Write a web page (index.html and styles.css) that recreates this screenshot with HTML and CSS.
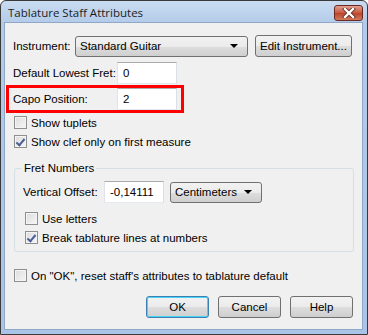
FILE: index.html
```html
<!DOCTYPE html>
<html lang="en">
<head>
  <meta charset="UTF-8">
  <title>Tablature Staff Attributes</title>
  <link rel="stylesheet" href="styles.css">
</head>
<body>
  <div class="window">
    <div class="titlebar">
      <span class="title">Tablature Staff Attributes</span>
      <div class="close-btn">
        <svg width="14" height="10" viewBox="0 0 14 10">
          <path d="M3 1 L11 9 M11 1 L3 9" stroke="#5a2a22" stroke-width="4" stroke-linecap="square"/>
          <path d="M3 1 L11 9 M11 1 L3 9" stroke="#fff" stroke-width="2.4" stroke-linecap="square"/>
        </svg>
      </div>
    </div>

    <div class="client">
      <div class="row row-instrument">
        <span class="label">Instrument:</span>
        <div class="select select-instrument">
          <span>Standard Guitar</span>
          <span class="arrow"></span>
        </div>
        <div class="button button-edit">Edit Instrument...</div>
      </div>

      <div class="row row-fret">
        <span class="label label-wide">Default Lowest Fret:</span>
        <div class="field">0</div>
      </div>

      <div class="row row-capo">
        <span class="label label-wide">Capo Position:</span>
        <div class="field">2</div>
      </div>

      <div class="check-row">
        <span class="checkbox"></span>
        <span>Show tuplets</span>
      </div>
      <div class="check-row">
        <span class="checkbox checked"></span>
        <span>Show clef only on first measure</span>
      </div>

      <fieldset class="group">
        <legend>Fret Numbers</legend>
        <div class="row row-offset">
          <span class="label">Vertical Offset:</span>
          <div class="field field-offset">-0,14111</div>
          <div class="select select-units">
            <span>Centimeters</span>
            <span class="arrow"></span>
          </div>
        </div>
        <div class="check-row">
          <span class="checkbox"></span>
          <span>Use letters</span>
        </div>
        <div class="check-row">
          <span class="checkbox checked"></span>
          <span>Break tablature lines at numbers</span>
        </div>
      </fieldset>

      <div class="check-row check-reset">
        <span class="checkbox"></span>
        <span>On "OK", reset staff's attributes to tablature default</span>
      </div>

      <div class="buttons">
        <div class="button button-default">OK</div>
        <div class="button">Cancel</div>
        <div class="button">Help</div>
      </div>
    </div>
  </div>
</body>
</html>
```

FILE: styles.css
```css
body {
  margin: 0;
  font-family: 'Liberation Sans', Arial, sans-serif;
  font-size: 11.5px;
  color: #000;
  background: #fff;
}

.window {
  width: 368px;
  height: 335px;
  box-sizing: border-box;
  border: 1px solid #3a3a3a;
  border-radius: 6px 6px 0 0;
  background: linear-gradient(#c9dcf1, #b3cbe9 22px, #a9c4e6);
  display: flex;
  flex-direction: column;
  padding: 0 4px 4px 3px;
}

.titlebar {
  height: 21px;
  display: flex;
  align-items: center;
  justify-content: space-between;
  flex-shrink: 0;
}

.title {
  font-family: 'Open Sans', sans-serif;
  font-size: 11.5px;
  color: #1c1c1c;
  padding-left: 4px;
  padding-top: 1px;
}

.close-btn {
  width: 27px;
  height: 14px;
  margin-top: 2px;
  border: 1px solid #6b2a20;
  border-radius: 3px;
  background: linear-gradient(#e0a090, #c8573f 50%, #b9432b 51%, #d27a5e);
  display: flex;
  align-items: center;
  justify-content: center;
}

.client {
  flex: 1;
  background: #f0f0f0;
  border: 1px solid #8fa8c8;
  padding: 0 8px;
  display: flex;
  flex-direction: column;
}

.row {
  display: flex;
  align-items: center;
}

.label {
  white-space: nowrap;
}

.row-instrument {
  margin-top: 12px;
  height: 22px;
}

.row-instrument .label {
  width: 62px;
}

.select {
  height: 21px;
  box-sizing: border-box;
  border: 1px solid #707070;
  border-radius: 3px;
  background: linear-gradient(#f2f2f2, #ebebeb 50%, #dddddd 51%, #cfcfcf);
  display: flex;
  align-items: center;
  justify-content: space-between;
  padding: 0 9px 0 4px;
}

.select-instrument {
  width: 173px;
}

.arrow {
  width: 0;
  height: 0;
  border-left: 4px solid transparent;
  border-right: 4px solid transparent;
  border-top: 4px solid #000;
}

.button {
  height: 22px;
  width: 63px;
  box-sizing: border-box;
  border: 1px solid #707070;
  border-radius: 3px;
  background: linear-gradient(#f2f2f2, #ebebeb 50%, #dddddd 51%, #cfcfcf);
  display: flex;
  align-items: center;
  justify-content: center;
}

.button-edit {
  width: 97px;
  margin-left: 7px;
}

.field {
  height: 22px;
  width: 60px;
  box-sizing: border-box;
  background: #fff;
  border: 1px solid #abadb3;
  border-top-color: #aaaaaa;
  border-left-color: #e2e3ea;
  border-right-color: #dbdfe6;
  border-bottom-color: #e3e9ef;
  display: flex;
  align-items: center;
  padding-left: 5px;
}

.row-fret {
  margin-top: 5px;
  height: 22px;
}

.label-wide {
  width: 104px;
}

.row-capo {
  margin: 1px 0 0 -7px;
  padding-left: 4px;
  width: 178px;
  box-sizing: border-box;
  border: 3px solid #ff0000;
  height: 28px;
}

.check-row {
  display: flex;
  align-items: center;
  height: 19px;
  padding-left: 1px;
}

.checkbox {
  width: 13px;
  height: 13px;
  box-sizing: border-box;
  border: 1px solid #8e8f8f;
  background: linear-gradient(135deg, #dcdcdc, #f6f6f6);
  box-shadow: inset 0 0 0 1px #f4f4f4;
  margin-right: 4px;
  position: relative;
}

.checked::after {
  content: "";
  position: absolute;
  left: 3px;
  top: 1px;
  width: 3px;
  height: 7px;
  border: solid #4a5f97;
  border-width: 0 2px 2px 0;
  transform: rotate(40deg);
}

.group {
  margin: 11px 0 0 1px;
  padding: 7px 8px 0 8px;
  border: 1px solid #d5dfe5;
  border-radius: 3px;
  height: 90px;
  box-sizing: border-box;
  width: 340px;
}

.group legend {
  padding: 0 2px;
  margin-left: -1px;
}

.row-offset {
  height: 22px;
}

.row-offset .label {
  width: 81px;
}

.field-offset {
  width: 60px;
  margin-right: 6px;
}

.select-units {
  width: 92px;
}

.group .check-row {
  height: 19px;
  padding-left: 2px;
}

.group .row-offset + .check-row {
  margin-top: 6px;
}

.check-reset {
  margin-top: 14px;
}

.buttons {
  display: flex;
  justify-content: flex-end;
  gap: 9px;
  margin-top: 11px;
  padding-right: 1px;
}

.button-default {
  border-color: #3c7fb1;
  box-shadow: inset 0 0 0 1px #48d4f7;
}
```
